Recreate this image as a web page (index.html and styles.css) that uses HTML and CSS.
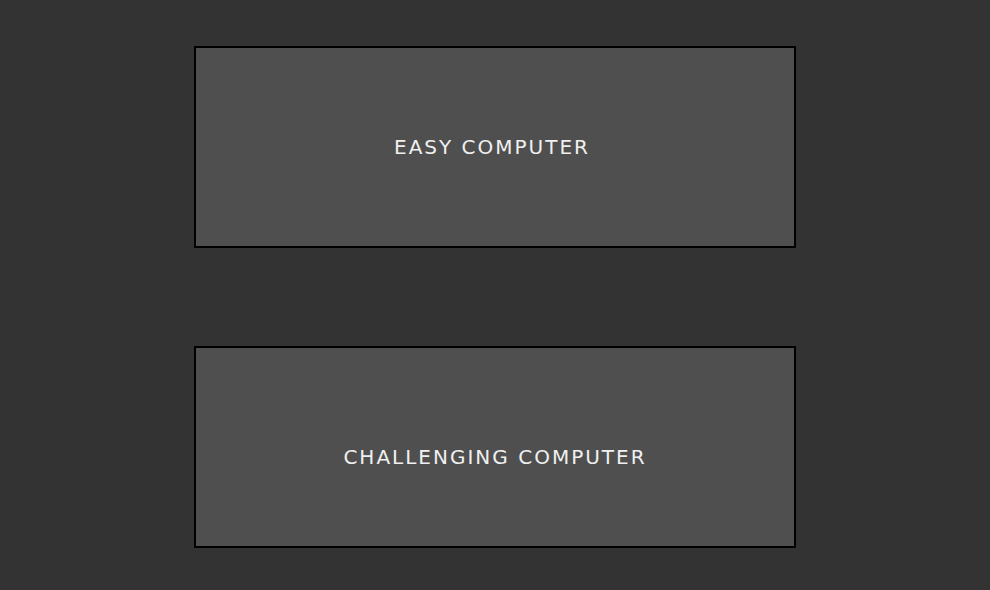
FILE: index.html
```html
<!DOCTYPE html>
<html>
<head>
<meta charset="utf-8">
<link rel="stylesheet" href="styles.css">
</head>
<body>
<div class="menu">
  <div class="option option-easy">EASY COMPUTER</div>
  <div class="option option-hard">CHALLENGING COMPUTER</div>
</div>
</body>
</html>
```
FILE: styles.css
```css
html, body {
  margin: 0;
  padding: 0;
  background: #333333;
  height: 100%;
}
.menu {
  display: flex;
  flex-direction: column;
  align-items: center;
  padding-top: 46px;
  gap: 98px;
}
.option {
  box-sizing: border-box;
  width: 602px;
  height: 202px;
  background: #4f4f4f;
  border: 2px solid #000;
  color: #f0f0f0;
  font-family: "DejaVu Sans", sans-serif;
  font-size: 20px;
  letter-spacing: 2px;
  display: flex;
  align-items: center;
  justify-content: center;
}
.option-easy {
  padding-right: 6px;
}
.option-hard {
  padding-top: 20px;
}
```
